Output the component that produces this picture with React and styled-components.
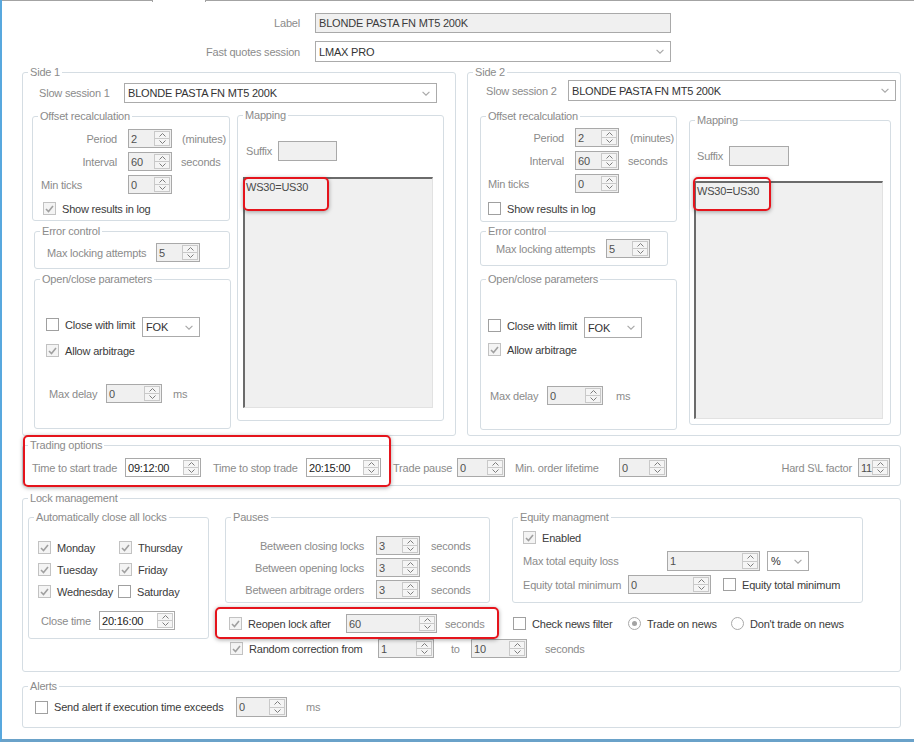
import React from "react";
import styled, { createGlobalStyle } from "styled-components";

const GlobalStyle = createGlobalStyle`
  html, body {
    margin: 0;
    padding: 0;
    background: #fff;
  }
  * {
    box-sizing: border-box;
  }
`;

const GRAY = "#8b8b8b";
const DARK = "#3b3b3b";

const Window = styled.div`
  position: relative;
  width: 914px;
  height: 742px;
  overflow: hidden;
  background: #fff;
  border-left: 2px solid #58a8de;
  border-bottom: 3px solid #6aa2c9;
  display: flex;
  flex-direction: column;
  font-family: "Liberation Sans", Arial, sans-serif;
  font-size: 11px;
  letter-spacing: -0.2px;
  color: ${GRAY};
`;

/* top edge of the tab control, with the selected tab gap */
const TabStrip = styled.div`
  display: flex;
  align-items: flex-start;
  height: 2px;
  flex-shrink: 0;
`;

const TabLine = styled.div`
  height: 1px;
  background: #a3a3a3;
  width: ${(p) => (p.$w ? `${p.$w}px` : "auto")};
  flex: ${(p) => (p.$w ? "none" : "1")};
`;

const TabGap = styled.div`
  width: 54px;
  height: 2px;
  border-left: 1px solid #a3a3a3;
  border-right: 1px solid #a3a3a3;
`;

const Content = styled.div`
  display: flex;
  flex-direction: column;
  align-items: flex-start;
  padding-left: 20px;
`;

const Header = styled.div`
  display: grid;
  grid-template-columns: 278px 356px;
  grid-template-rows: 20px 21px;
  column-gap: 15px;
  row-gap: 8px;
  margin-top: 11px;
`;

const HeaderLabel = styled.div`
  display: flex;
  align-items: center;
  justify-content: flex-end;
  white-space: nowrap;
`;

const TextBox = styled.div`
  display: flex;
  align-items: center;
  width: ${(p) => (p.$w ? `${p.$w}px` : "auto")};
  height: ${(p) => p.$h || 20}px;
  padding-left: 3px;
  border: 1px solid #a9a9a9;
  background: #f0f0f0;
  color: ${DARK};
  white-space: nowrap;
  flex-shrink: 0;
`;

const Group = styled.fieldset`
  margin: ${(p) => p.$m || 0};
  padding: 0;
  width: ${(p) => p.$w}px;
  height: ${(p) => p.$h}px;
  min-width: 0;
  border: 1px solid #d5dde3;
  border-radius: 3px;
  flex-shrink: 0;
`;

const Legend = styled.legend`
  margin-left: 5px;
  padding: 0 2px;
  line-height: 14px;
  color: ${GRAY};
  white-space: nowrap;
`;

const Body = styled.div`
  display: flex;
  flex-direction: column;
  align-items: flex-start;
  padding: ${(p) => p.$p || 0};
`;

const Row = styled.div`
  display: flex;
  align-items: ${(p) => p.$align || "center"};
  margin: ${(p) => p.$m || 0};
  flex-shrink: 0;
  width: ${(p) => (p.$w ? `${p.$w}px` : "auto")};
`;

const Columns = styled.div`
  display: flex;
  align-items: flex-start;
  gap: ${(p) => p.$gap}px;
  margin: ${(p) => p.$m || 0};
`;

const Stack = styled.div`
  display: flex;
  flex-direction: column;
  align-items: flex-start;
  width: ${(p) => p.$w}px;
  margin: ${(p) => p.$m || 0};
`;

const FieldLabel = styled.div`
  display: flex;
  justify-content: ${(p) => (p.$right ? "flex-end" : "flex-start")};
  width: ${(p) => p.$w}px;
  padding-left: ${(p) => p.$pl || 0}px;
  padding-right: ${(p) => p.$pr || 0}px;
  white-space: nowrap;
  flex-shrink: 0;
  color: ${GRAY};
`;

const Unit = styled.div`
  margin-left: ${(p) => p.$ml || 0}px;
  white-space: nowrap;
  color: ${GRAY};
`;

const Spacer = styled.div`
  flex: 1;
`;

/* numeric up/down and time pickers */
const SpinBox = styled.div`
  display: flex;
  width: ${(p) => p.$w}px;
  height: ${(p) => p.$h || 19}px;
  border: 1px solid #a9a9a9;
  background: ${(p) => (p.$enabled ? "#fff" : "#f0f0f0")};
  flex-shrink: 0;
`;

const SpinValue = styled.div`
  flex: 1;
  display: flex;
  align-items: center;
  padding-left: 2px;
  overflow: hidden;
  white-space: nowrap;
  color: ${(p) => (p.$enabled ? "#222" : "#505050")};
`;

const SpinButtons = styled.div`
  display: flex;
  flex-direction: column;
  width: 16px;
  margin: 1px 1px 1px 0;
  border: 1px solid #c9c9c9;
  background: #f5f5f5;
  flex-shrink: 0;
`;

const SpinHalf = styled.div`
  flex: 1;
  display: flex;
  align-items: center;
  justify-content: center;

  & + & {
    border-top: 1px solid #c9c9c9;
  }
`;

const ComboBox = styled.div`
  display: flex;
  align-items: center;
  justify-content: space-between;
  width: ${(p) => p.$w}px;
  height: ${(p) => p.$h || 20}px;
  margin: ${(p) => p.$m || 0};
  padding: 0 6px 0 3px;
  border: 1px solid #ababab;
  background: #fff;
  color: #333;
  white-space: nowrap;
  flex-shrink: 0;
`;

const CheckWrap = styled.div`
  display: flex;
  align-items: center;
  height: 17px;
  width: ${(p) => (p.$w ? `${p.$w}px` : "auto")};
  margin: ${(p) => p.$m || 0};
  color: ${DARK};
  white-space: nowrap;
  flex-shrink: 0;
`;

const CheckBox = styled.span`
  display: flex;
  align-items: center;
  justify-content: center;
  width: 13px;
  height: 13px;
  margin-right: 6px;
  border: 1px solid ${(p) => (p.$checked ? "#c2c2c2" : "#a0a0a0")};
  background: ${(p) => (p.$checked ? "#f4f4f4" : "#fff")};
  flex-shrink: 0;
`;

const RadioCircle = styled.span`
  display: flex;
  align-items: center;
  justify-content: center;
  width: 13px;
  height: 13px;
  margin-right: 6px;
  border: 1px solid #a9a9a9;
  border-radius: 50%;
  background: #fff;
  flex-shrink: 0;

  &::after {
    content: "";
    display: ${(p) => (p.$checked ? "block" : "none")};
    width: 5px;
    height: 5px;
    border-radius: 50%;
    background: #a3a3a3;
  }
`;

const ListBox = styled.div`
  width: ${(p) => p.$w}px;
  height: ${(p) => p.$h}px;
  margin: ${(p) => p.$m || 0};
  padding: 1px 0 0 1px;
  border-top: 2px solid #6b6b6b;
  border-left: 2px solid #6b6b6b;
  border-right: 1px solid #e2e2e2;
  border-bottom: 1px solid #e2e2e2;
  background: #f0f0f0;
  color: #4a4a4a;
  line-height: 14px;
  flex-shrink: 0;
`;

const DayGrid = styled.div`
  display: grid;
  grid-template-columns: 81px auto;
  row-gap: 5px;
`;

/* red annotation frames drawn over the dialog */
const Highlight = styled.div`
  position: absolute;
  left: ${(p) => p.$x}px;
  top: ${(p) => p.$y}px;
  width: ${(p) => p.$w}px;
  height: ${(p) => p.$h}px;
  border: 2px solid #e5141c;
  border-radius: 5px;
  box-shadow: 0 1px 4px rgba(0, 0, 0, 0.35);
  pointer-events: none;
`;

const Chevron = ({ up, color = "#7d7d7d", w = 7, h = 4 }) => (
  <svg width={w} height={h} viewBox="0 0 7 4" style={{ display: "block" }}>
    <path
      d={up ? "M0.5 3.5 L3.5 0.5 L6.5 3.5" : "M0.5 0.5 L3.5 3.5 L6.5 0.5"}
      fill="none"
      stroke={color}
      strokeWidth="1"
    />
  </svg>
);

const Spin = ({ w, h, value, enabled }) => (
  <SpinBox $w={w} $h={h} $enabled={enabled}>
    <SpinValue $enabled={enabled}>{value}</SpinValue>
    <SpinButtons>
      <SpinHalf>
        <Chevron up />
      </SpinHalf>
      <SpinHalf>
        <Chevron />
      </SpinHalf>
    </SpinButtons>
  </SpinBox>
);

const Combo = ({ w, h, value, m }) => (
  <ComboBox $w={w} $h={h} $m={m}>
    <span>{value}</span>
    <Chevron color="#a8a8a8" w={8} h={5} />
  </ComboBox>
);

const Check = ({ label, checked, w, m }) => (
  <CheckWrap $w={w} $m={m}>
    <CheckBox $checked={checked}>
      {checked && (
        <svg width="9" height="8" viewBox="0 0 9 8" style={{ display: "block" }}>
          <path d="M1 4 L3.5 6.5 L8 1" fill="none" stroke="#a0a0a0" strokeWidth="1.6" />
        </svg>
      )}
    </CheckBox>
    {label}
  </CheckWrap>
);

const Radio = ({ label, checked, w, m }) => (
  <CheckWrap $w={w} $m={m}>
    <RadioCircle $checked={checked} />
    {label}
  </CheckWrap>
);

const SideOne = () => (
  <Group $w={434} $h={371}>
    <Legend>Side 1</Legend>
    <Body $p="4px 0 0 0">
      <Row $m="0 0 0 16px">
        <FieldLabel $w={85}>Slow session 1</FieldLabel>
        <Combo w={313} h={20} value="BLONDE PASTA FN MT5 200K" />
      </Row>
      <Columns $gap={6} $m="5px 0 0 9px">
        <Stack $w={199}>
          <Group $w={198} $h={112} $m="1px 0 0 0">
            <Legend>Offset recalculation</Legend>
            <Body $p="6px 0 0 0">
              <Row>
                <FieldLabel $w={95} $right $pr={11}>Period</FieldLabel>
                <Spin w={44} value="2" />
                <Unit $ml={10}>(minutes)</Unit>
              </Row>
              <Row $m="4px 0 0 0">
                <FieldLabel $w={95} $right $pr={11}>Interval</FieldLabel>
                <Spin w={44} value="60" />
                <Unit $ml={9}>seconds</Unit>
              </Row>
              <Row $m="4px 0 0 0">
                <FieldLabel $w={95} $pl={8}>Min ticks</FieldLabel>
                <Spin w={44} value="0" />
              </Row>
              <Check m="6px 0 0 10px" checked label="Show results in log" />
            </Body>
          </Group>
          <Group $w={196} $h={45} $m="3px 0 0 2px">
            <Legend>Error control</Legend>
            <Body $p="5px 0 0 0">
              <Row>
                <FieldLabel $w={121} $pl={12}>Max locking attempts</FieldLabel>
                <Spin w={44} value="5" />
              </Row>
            </Body>
          </Group>
          <Group $w={197} $h={157} $m="3px 0 0 2px">
            <Legend>Open/close parameters</Legend>
            <Body $p="30px 0 0 11px">
              <Row $align="flex-start">
                <Check w={96} label="Close with limit" />
                <Combo w={58} h={20} m="1px 0 0 0" value="FOK" />
              </Row>
              <Check m="5px 0 0 0" checked label="Allow arbitrage" />
              <Row $m="25px 0 0 0">
                <FieldLabel $w={60} $pl={3}>Max delay</FieldLabel>
                <Spin w={56} value="0" />
                <Unit $ml={11}>ms</Unit>
              </Row>
            </Body>
          </Group>
        </Stack>
        <Group $w={207} $h={313}>
          <Legend>Mapping</Legend>
          <Body $p="19px 0 0 0">
            <Row>
              <FieldLabel $w={40} $pl={8}>Suffix</FieldLabel>
              <TextBox $w={59} $h={20} />
            </Row>
            <ListBox $w={190} $h={231} $m="16px 0 0 5px">WS30=US30</ListBox>
          </Body>
        </Group>
      </Columns>
    </Body>
  </Group>
);

const SideTwo = () => (
  <Group $w={434} $h={371}>
    <Legend>Side 2</Legend>
    <Body $p="1px 0 0 0">
      <Row $m="0 0 0 18px">
        <FieldLabel $w={82}>Slow session 2</FieldLabel>
        <Combo w={328} h={21} value="BLONDE PASTA FN MT5 200K" />
      </Row>
      <Columns $gap={12} $m="8px 0 0 12px">
        <Stack $w={197}>
          <Group $w={197} $h={113}>
            <Legend>Offset recalculation</Legend>
            <Body $p="5px 0 0 0">
              <Row>
                <FieldLabel $w={94} $right $pr={11}>Period</FieldLabel>
                <Spin w={44} value="2" />
                <Unit $ml={11}>(minutes)</Unit>
              </Row>
              <Row $m="4px 0 0 0">
                <FieldLabel $w={94} $right $pr={11}>Interval</FieldLabel>
                <Spin w={44} value="60" />
                <Unit $ml={9}>seconds</Unit>
              </Row>
              <Row $m="4px 0 0 0">
                <FieldLabel $w={94} $pl={7}>Min ticks</FieldLabel>
                <Spin w={44} value="0" />
              </Row>
              <Check m="7px 0 0 7px" label="Show results in log" />
            </Body>
          </Group>
          <Group $w={188} $h={42} $m="2px 0 0 0">
            <Legend>Error control</Legend>
            <Body $p="1px 0 0 0">
              <Row>
                <FieldLabel $w={125} $pl={15}>Max locking attempts</FieldLabel>
                <Spin w={44} value="5" />
              </Row>
            </Body>
          </Group>
          <Group $w={197} $h={158} $m="6px 0 0 0">
            <Legend>Open/close parameters</Legend>
            <Body $p="31px 0 0 7px">
              <Row $align="flex-start">
                <Check w={96} label="Close with limit" />
                <Combo w={58} h={21} value="FOK" />
              </Row>
              <Check m="3px 0 0 0" checked label="Allow arbitrage" />
              <Row $m="28px 0 0 0">
                <FieldLabel $w={59} $pl={2}>Max delay</FieldLabel>
                <Spin w={56} value="0" />
                <Unit $ml={13}>ms</Unit>
              </Row>
            </Body>
          </Group>
        </Stack>
        <Group $w={202} $h={312} $m="4px 0 0 0">
          <Legend>Mapping</Legend>
          <Body $p="19px 0 0 0">
            <Row>
              <FieldLabel $w={39} $pl={7}>Suffix</FieldLabel>
              <TextBox $w={60} $h={20} />
            </Row>
            <ListBox $w={189} $h={238} $m="15px 0 0 4px">WS30=US30</ListBox>
          </Body>
        </Group>
      </Columns>
    </Body>
  </Group>
);

const TradingOptions = () => (
  <Group $w={879} $h={48} $m="2px 0 0 0">
    <Legend>Trading options</Legend>
    <Body $p="6px 10px 0 9px">
      <Row $w={858}>
        <FieldLabel $w={93}>Time to start trade</FieldLabel>
        <Spin w={76} value="09:12:00" enabled />
        <FieldLabel $w={105} $pl={12}>Time to stop trade</FieldLabel>
        <Spin w={75} value="20:15:00" enabled />
        <FieldLabel $w={76} $pl={12}>Trade pause</FieldLabel>
        <Spin w={48} value="0" />
        <FieldLabel $w={114} $pl={10}>Min. order lifetime</FieldLabel>
        <Spin w={48} value="0" />
        <Spacer />
        <Unit>{"Hard S\\L factor"}</Unit>
        <Unit $ml={6} />
        <Spin w={32} value="11" />
      </Row>
    </Body>
  </Group>
);

const LockManagement = () => (
  <Group $w={879} $h={181} $m="5px 0 0 0">
    <Legend>Lock management</Legend>
    <Body $p="5px 0 0 5px">
      <Row $align="flex-start">
        <Group $w={181} $h={129}>
          <Legend>Automatically close all locks</Legend>
          <Body $p="15px 0 0 9px">
            <DayGrid>
              <Check checked label="Monday" />
              <Check checked label="Thursday" />
              <Check checked label="Tuesday" />
              <Check checked label="Friday" />
              <Check checked label="Wednesday" />
              <Check label="Saturday" m="0 0 0 -1px" />
            </DayGrid>
            <Row $m="11px 0 0 3px">
              <FieldLabel $w={58}>Close time</FieldLabel>
              <Spin w={76} value="20:16:00" enabled />
            </Row>
          </Body>
        </Group>
        <Stack $w={660} $m="0 0 0 16px">
          <Row $align="flex-start">
            <Group $w={265} $h={93}>
              <Legend>Pauses</Legend>
              <Body $p="12px 0 0 0">
                <Row>
                  <FieldLabel $w={150} $right $pr={12}>Between closing locks</FieldLabel>
                  <Spin w={44} value="3" />
                  <Unit $ml={11}>seconds</Unit>
                </Row>
                <Row $m="3px 0 0 0">
                  <FieldLabel $w={150} $right $pr={12}>Between opening locks</FieldLabel>
                  <Spin w={44} value="3" />
                  <Unit $ml={11}>seconds</Unit>
                </Row>
                <Row $m="3px 0 0 0">
                  <FieldLabel $w={150} $right $pr={12}>Between arbitrage orders</FieldLabel>
                  <Spin w={44} value="3" />
                  <Unit $ml={11}>seconds</Unit>
                </Row>
              </Body>
            </Group>
            <Group $w={351} $h={93} $m="0 0 0 22px">
              <Legend>Equity managment</Legend>
              <Body $p="5px 0 0 10px">
                <Check checked label="Enabled" />
                <Row $m="5px 0 0 0">
                  <FieldLabel $w={144}>Max total equity loss</FieldLabel>
                  <Spin w={93} h={20} value="1" />
                  <Combo w={42} h={20} m="0 0 0 7px" value="%" />
                </Row>
                <Row $m="4px 0 0 0">
                  <FieldLabel $w={105}>Equity total minimum</FieldLabel>
                  <Spin w={83} value="0" />
                  <Check m="0 0 0 12px" label="Equity total minimum" />
                </Row>
              </Body>
            </Group>
          </Row>
          <Row $m="11px 0 0 4px">
            <Check w={117} checked label="Reopen lock after" />
            <Spin w={91} value="60" />
            <FieldLabel $w={76} $pl={8}>seconds</FieldLabel>
            <Check w={115} label="Check news filter" />
            <Radio w={103} checked label="Trade on news" />
            <Radio label="Don't trade on news" />
          </Row>
          <Row $m="6px 0 0 5px">
            <Check w={148} checked label="Random correction from" />
            <Spin w={56} value="1" />
            <FieldLabel $w={37} $pl={17}>to</FieldLabel>
            <Spin w={56} value="10" />
            <Unit $ml={18}>seconds</Unit>
          </Row>
        </Stack>
      </Row>
    </Body>
  </Group>
);

const Alerts = () => (
  <Group $w={879} $h={49} $m="7px 0 0 0">
    <Legend>Alerts</Legend>
    <Body $p="4px 0 0 12px">
      <Row>
        <Check w={201} label="Send alert if execution time exceeds" />
        <Spin w={51} h={20} value="0" />
        <Unit $ml={19}>ms</Unit>
      </Row>
    </Body>
  </Group>
);

export default function App() {
  return (
    <>
      <GlobalStyle />
      <Window>
        <TabStrip>
          <TabLine $w={150} />
          <TabGap />
          <TabLine />
        </TabStrip>
        <Content>
          <Header>
            <HeaderLabel>Label</HeaderLabel>
            <TextBox>BLONDE PASTA FN MT5 200K</TextBox>
            <HeaderLabel>Fast quotes session</HeaderLabel>
            <Combo w={356} h={21} value="LMAX PRO" />
          </Header>
          <Columns $gap={11} $m="3px 0 0 0">
            <SideOne />
            <SideTwo />
          </Columns>
          <TradingOptions />
          <LockManagement />
          <Alerts />
        </Content>

        <Highlight $x={241} $y={177} $w={86} $h={34} />
        <Highlight $x={691} $y={177} $w={78} $h={34} />
        <Highlight $x={21} $y={435} $w={368} $h={52} />
        <Highlight $x={213} $y={607} $w={284} $h={32} />
      </Window>
    </>
  );
}
